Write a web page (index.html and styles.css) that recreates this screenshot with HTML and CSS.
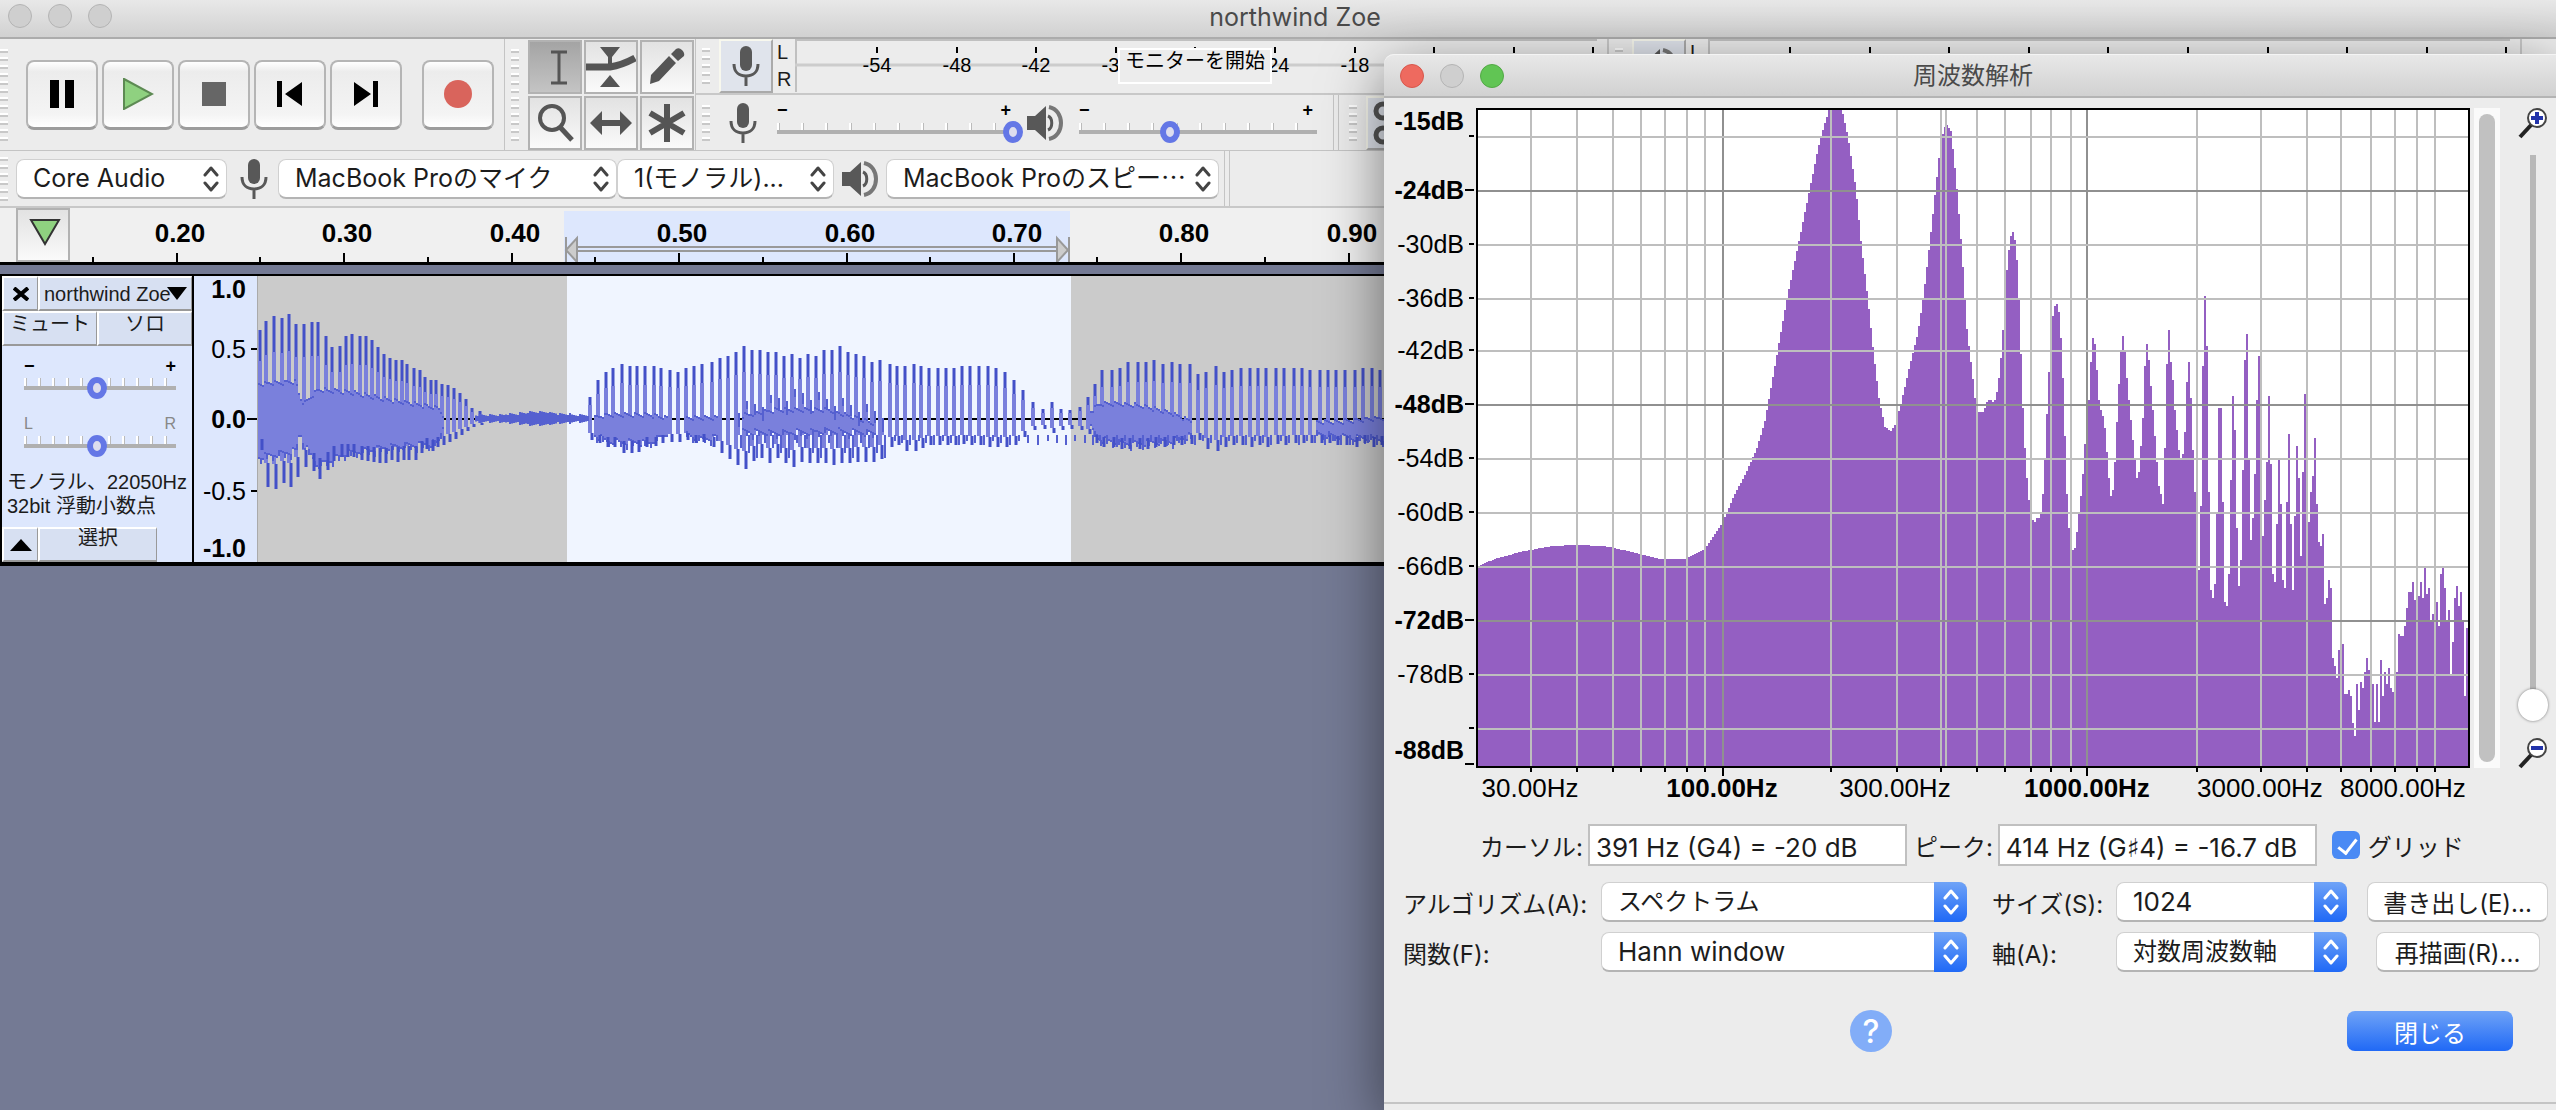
FILE: index.html
```html
<!DOCTYPE html>
<html lang="ja">
<head>
    <meta charset="UTF-8">
    <meta name="viewport" content="width=device-width, initial-scale=1.0">
    <title>northwind Zoe</title>
    <link rel="stylesheet" href="styles.css">
</head>
<body>

    <!-- Shared icons -->
    <svg class="sprite" aria-hidden="true">
        <symbol id="mic" viewBox="0 0 28 40">
            <rect x="8" y="0" width="12" height="25" rx="6" fill="#585858"/>
            <path d="M2 18c0 8 5 12 12 12s12-4 12-12M14 30v10" fill="none" stroke="#585858" stroke-width="3"/>
        </symbol>
        <symbol id="speaker" viewBox="0 0 38 36">
            <path d="M1 11h8L20 1v34L9 25H1z" fill="#585858"/>
            <path d="M22 11c5 2 5 12 0 14" fill="none" stroke="#585858" stroke-width="3"/>
            <path d="M23 2c16 3 16 29 0 32" fill="none" stroke="#777" stroke-width="4"/>
        </symbol>
        <symbol id="updown" viewBox="0 0 16 26">
            <path d="M2 9l6-7 6 7M2 17l6 7 6-7" fill="none" stroke="currentColor" stroke-width="3" stroke-linecap="round" stroke-linejoin="round"/>
        </symbol>
    </svg>

    <div class="app">
        <header class="titlebar">
            <div class="lights"><i></i><i></i><i></i></div>
            <h1>northwind Zoe</h1>
        </header>

        <!-- Toolbars -->
        <div class="dock">
            <div class="toolbar transport">
                <span class="grip"></span>
                <button aria-label="Pause"><svg width="26" height="28"><path d="M1 0h9v28H1zM16 0h9v28h-9z"/></svg></button>
                <button aria-label="Play"><svg width="32" height="32"><path d="M2 1l28 15L2 31z" fill="#8fd180" stroke="#5d8a53" stroke-width="2"/></svg></button>
                <button aria-label="Stop"><svg width="24" height="24"><path d="M0 0h24v24H0z" fill="#666"/></svg></button>
                <button aria-label="Start"><svg width="26" height="26"><path d="M0 0h5v26H0zM25 1v24L8 13z"/></svg></button>
                <button aria-label="End"><svg width="26" height="26"><path d="M20 0h5v26h-5zM1 1v24l17-12z"/></svg></button>
                <button class="record" aria-label="Record"><svg width="28" height="28"><circle cx="14" cy="14" r="14" fill="#d9645c"/></svg></button>
            </div>
            <div class="toolbar tools">
                <span class="grip"></span>
                <div class="tool-grid">
                    <button class="active" aria-label="Selection"><svg width="40" height="40"><path d="M16 5h16M16 36h16M24 5v31" stroke="#555" stroke-width="3"/></svg></button>
                    <button aria-label="Envelope"><svg width="50" height="44"><path d="M14 2h20L26 12v8h-4v-8zM14 42h20L24 30z" fill="#555"/><path d="M0 22h24q12-2 25-9" fill="none" stroke="#555" stroke-width="7"/></svg></button>
                    <button aria-label="Draw"><svg width="40" height="40"><path d="M3 37l1-9L22 9l7 7-17 18zM24 7l5-5q3-2 6 1t2 6l-6 5z" fill="#555"/></svg></button>
                    <button aria-label="Zoom"><svg width="40" height="40"><circle cx="17" cy="15" r="12" fill="none" stroke="#555" stroke-width="4"/><path d="M24 23l13 14" stroke="#555" stroke-width="5"/></svg></button>
                    <button aria-label="Time shift"><svg width="42" height="30"><path d="M0 15L12 3v9h18V3l12 12-12 12v-9H12v9z" fill="#555"/></svg></button>
                    <button aria-label="Multi"><svg width="40" height="40"><path d="M20 1v38M3 10l34 20M37 10L3 30" stroke="#555" stroke-width="6"/></svg></button>
                </div>
            </div>
            <div class="side">
                <div class="toolbar meters">
                    <div class="meter">
                        <span class="grip"></span>
                        <button class="meter-btn" aria-label="Record meter"><svg width="28" height="40"><use href="#mic"/></svg></button>
                        <div class="lr"><span>L</span><span>R</span></div>
                        <svg class="scale" id="recMeter" width="802" height="54"></svg>
                        <span class="tooltip">モニターを開始</span>
                    </div>
                    <div class="meter play">
                        <span class="grip"></span>
                        <button class="meter-btn" aria-label="Playback meter"><svg width="38" height="36"><use href="#speaker"/></svg></button>
                        <div class="lr"><span>L</span><span>R</span></div>
                        <svg class="scale" id="playMeter" width="802" height="54"></svg>
                    </div>
                </div>
                <div class="toolbar mixer">
                    <span class="grip"></span>
                    <svg class="mic" width="28" height="40"><use href="#mic"/></svg>
                    <div class="gain"><span>−</span><span>+</span><input type="range" aria-label="Recording volume" value="100"></div>
                    <svg class="speaker" width="38" height="36"><use href="#speaker"/></svg>
                    <div class="gain"><span>−</span><span>+</span><input type="range" aria-label="Playback volume" value="36"></div>
                    <span class="divider"></span>
                    <span class="grip"></span>
                    <button class="meter-btn" aria-label="Cut"><svg width="40" height="44"><g fill="none" stroke="#555" stroke-width="5"><circle cx="10" cy="10" r="7"/><circle cx="10" cy="34" r="7"/></g></svg></button>
                </div>
            </div>
        </div>

        <div class="toolbar devices">
            <span class="grip"></span>
            <div class="popup host">
                <select aria-label="Audio host"><option>Core Audio</option></select>
                <svg width="16" height="26"><use href="#updown"/></svg>
            </div>
            <svg class="mic" width="28" height="40"><use href="#mic"/></svg>
            <div class="popup input">
                <select aria-label="Recording device"><option>MacBook Proのマイク</option></select>
                <svg width="16" height="26"><use href="#updown"/></svg>
            </div>
            <div class="popup channels">
                <select aria-label="Recording channels"><option>1(モノラル)...</option></select>
                <svg width="16" height="26"><use href="#updown"/></svg>
            </div>
            <svg class="speaker" width="38" height="36"><use href="#speaker"/></svg>
            <div class="popup output">
                <select aria-label="Playback device"><option>MacBook Proのスピー⋯</option></select>
                <svg width="16" height="26"><use href="#updown"/></svg>
            </div>
            <span class="divider"></span>
        </div>

        <!-- Timeline -->
        <div class="timeline">
            <button class="pin" aria-label="Pinned play head"><svg width="32" height="28"><path d="M2 2h28L16 26z" fill="#8fd180" stroke="#333" stroke-width="2"/></svg></button>
            <svg id="ruler" width="2556" height="56"></svg>
        </div>

        <!-- Track -->
        <div class="track">
            <div class="panel">
                <div class="row">
                    <button class="close" aria-label="Close track"><svg width="16" height="14"><path d="M1 1l14 12M15 1L1 13" stroke="#000" stroke-width="4"/></svg></button>
                    <button class="name">northwind Zoe<svg width="20" height="13"><path d="M0 0h20L10 13z"/></svg></button>
                </div>
                <div class="row">
                    <button class="half">ミュート</button>
                    <button class="half">ソロ</button>
                </div>
                <div class="gain small"><span>−</span><span>+</span><input type="range" aria-label="Gain" value="48"></div>
                <div class="gain small pan"><span>L</span><span>R</span><input type="range" aria-label="Pan" value="48"></div>
                <p>モノラル、22050Hz<br>32bit 浮動小数点</p>
                <div class="row bottom">
                    <button class="close" aria-label="Collapse"><svg width="22" height="12"><path d="M0 12h22L11 0z"/></svg></button>
                    <button class="choose">選択</button>
                </div>
            </div>
            <svg class="vruler" width="64" height="286">
                <path d="M57 73h7M53 143h11M57 215h7" stroke="#000" stroke-width="2"/>
                <g font-size="25" text-anchor="end">
                    <text x="52" y="22" font-weight="bold">1.0</text>
                    <text x="52" y="82">0.5</text>
                    <text x="52" y="152" font-weight="bold">0.0</text>
                    <text x="52" y="224">-0.5</text>
                    <text x="52" y="281" font-weight="bold">-1.0</text>
                </g>
            </svg>
            <svg id="wave" class="wave" height="286"></svg>
        </div>
    </div>

    <!-- Frequency analysis window -->
    <section class="dialog">
        <header class="titlebar">
            <div class="lights on"><i></i><i></i><i></i></div>
            <h2>周波数解析</h2>
        </header>

        <div class="plot">
            <svg class="chart" id="chart" viewBox="0 0 1086 706"></svg>
            <div class="scrollbar"><span></span></div>
            <div class="zoom">
                <svg width="30" height="32"><path d="M2 30l12-13" stroke="#222" stroke-width="4"/><circle cx="19" cy="11" r="9" fill="#fff" stroke="#444" stroke-width="2"/><path d="M13 11h12M19 5v12" stroke="#2233aa" stroke-width="4"/></svg>
                <input type="range" aria-label="Vertical zoom" value="0">
                <svg width="30" height="32"><path d="M2 30l12-13" stroke="#222" stroke-width="4"/><circle cx="19" cy="11" r="9" fill="#fff" stroke="#444" stroke-width="2"/><path d="M13 11h12" stroke="#2233aa" stroke-width="4"/></svg>
            </div>
        </div>

        <div class="readout">
            <label for="cursor">カーソル:</label>
            <input type="text" id="cursor" value="391 Hz (G4) = -20 dB" readonly>
            <label for="peak">ピーク:</label>
            <input type="text" id="peak" value="414 Hz (G♯4) = -16.7 dB" readonly>
            <input type="checkbox" id="grid" checked>
            <label for="grid">グリッド</label>
        </div>

        <div class="options">
            <label for="algorithm">アルゴリズム(A):</label>
            <div class="popup blue">
                <select id="algorithm"><option>スペクトラム</option></select>
                <svg width="16" height="26"><use href="#updown"/></svg>
            </div>
            <label for="size">サイズ(S):</label>
            <div class="popup blue short latin">
                <select id="size"><option>1024</option></select>
                <svg width="16" height="26"><use href="#updown"/></svg>
            </div>
            <button class="push">書き出し(E)...</button>

            <label for="func">関数(F):</label>
            <div class="popup blue latin">
                <select id="func"><option>Hann window</option></select>
                <svg width="16" height="26"><use href="#updown"/></svg>
            </div>
            <label for="axis">軸(A):</label>
            <div class="popup blue short">
                <select id="axis"><option>対数周波数軸</option></select>
                <svg width="16" height="26"><use href="#updown"/></svg>
            </div>
            <button class="push narrow">再描画(R)...</button>
        </div>

        <div class="actions">
            <button class="help">?</button>
            <button class="primary">閉じる</button>
        </div>
        <footer class="statusbar"></footer>
    </section>

    <script src="script.js"></script>
</body>
</html>
```

FILE: styles.css
```css
* {
    box-sizing: border-box;
}
body {
    margin: 0;
    height: 100vh;
    overflow: hidden;
    position: relative;
    background-color: #747a94;
    color: #1c1c1c;
    font-family: Inter, "Noto Sans CJK JP", sans-serif;
    font-size: 24px;
}
button, select, input {
    font: inherit;
    color: inherit;
    margin: 0;
    padding: 0;
}
button {
    display: flex;
    align-items: center;
    justify-content: center;
    border: none;
}
svg {
    display: block;
    flex: none;
}
.sprite {
    position: absolute;
    width: 0;
    height: 0;
}

/* Window title bars */
.titlebar {
    display: flex;
    align-items: center;
    justify-content: center;
    position: relative;
    height: 39px;
    background: linear-gradient(#e8e8e8, #d1d1d1);
    border-bottom: 2px solid #acacac;
}
.titlebar h1, .titlebar h2 {
    margin: 0;
    font-size: 24px;
    line-height: 32px;
    font-weight: normal;
    color: #4a4a4a;
}
.app .titlebar {
    padding-left: 34px;
    padding-bottom: 4px;
}
.titlebar h1 {
    font-size: 25px;
}
.lights {
    position: absolute;
    left: 8px;
    top: 4px;
    display: flex;
    gap: 16px;
}
.lights i {
    width: 24px;
    height: 24px;
    border-radius: 50%;
    background-color: #cfcfcf;
    border: 1px solid #b4b4b4;
}
.lights.on i:first-child {
    background-color: #ee6a5f;
    border-color: #d8574c;
}
.lights.on i:last-child {
    background-color: #61c554;
    border-color: #52a945;
}

/* Toolbars */
.dock {
    display: flex;
    height: 112px;
    background-color: #ececec;
    border-bottom: 1px solid #c4c4c4;
}
.toolbar {
    display: flex;
    align-items: center;
}
.grip {
    flex: none;
    width: 8px;
    height: 92px;
    background: repeating-linear-gradient(#fff 0 2px, #c8c8c8 2px 4px, transparent 4px 8px);
}
.transport {
    width: 505px;
    gap: 4px;
    border-right: 1px solid #c4c4c4;
}
.transport .grip {
    margin-right: 14px;
}
.transport button {
    width: 72px;
    height: 70px;
    border: 2px solid #b5b5b5;
    border-bottom: 3px solid #9c9c9c;
    border-radius: 8px;
    background: linear-gradient(#fff, #ececec 15%, #f4f4f4 80%, #fff);
}
.transport .record {
    margin-left: 16px;
}
.tools {
    padding-left: 6px;
    width: 190px;
}
.tools .grip {
    margin-right: 9px;
}
.tool-grid {
    display: grid;
    grid-template-columns: repeat(3, 54px);
    gap: 2px;
}
.tool-grid button {
    height: 54px;
    border: 2px solid #b2b2b2;
    background: linear-gradient(#e2e2e2, #fafafa);
}
.tool-grid .active {
    background: linear-gradient(#a4a4a4, #c4c4c4);
}
.side {
    flex: 1;
    min-width: 0;
    border-left: 1px solid #c4c4c4;
}
.meters {
    height: 56px;
    border-bottom: 2px solid #c8c8c8;
    overflow: hidden;
}
.meter {
    display: flex;
    align-items: center;
    position: relative;
    width: 913px;
    flex: none;
    padding-left: 6px;
    border-right: 2px solid #c8c8c8;
}
.meter .grip, .mixer .grip {
    height: 36px;
    margin-right: 9px;
}
.meter-btn {
    flex: none;
    width: 54px;
    height: 54px;
    border: 2px solid #aaa;
    border-top-color: #f8f8ee;
    border-left-color: #f8f8ee;
    background-color: #e0e4ec;
}
.lr {
    display: flex;
    flex-direction: column;
    width: 22px;
    padding-left: 4px;
    font: 20px/27px "Liberation Sans", sans-serif;
}
.scale, #ruler, .vruler, .chart {
    font-family: "Liberation Sans", sans-serif;
}
.tooltip {
    position: absolute;
    left: 422px;
    top: 9px;
    width: 154px;
    height: 36px;
    border: 2px solid #fff;
    background-color: #ececec;
    font-size: 20px;
    line-height: 22px;
    text-align: center;
    white-space: nowrap;
    color: #000;
}
.mixer {
    height: 55px;
    padding-left: 6px;
}
.mixer .mic {
    margin: 0 20px 0 10px;
}
.mixer .speaker {
    margin: 0 15px 0 3px;
}
.gain {
    display: flex;
    flex-wrap: wrap;
    justify-content: space-between;
    width: 246px;
    flex: none;
    font: bold 18px/20px "Liberation Sans", sans-serif;
    color: #000;
}
.gain input {
    appearance: none;
    width: 100%;
    height: 24px;
    margin-top: -2px;
    background:
        linear-gradient(#b0b0b0, #b0b0b0) 0 12px / calc(100% - 8px) 4px no-repeat,
        repeating-linear-gradient(90deg, #fff 0 2px, #bbb 2px 3px, transparent 3px 24px) 0 5px / calc(100% - 8px) 7px no-repeat;
}
.gain input::-webkit-slider-thumb {
    appearance: none;
    width: 20px;
    height: 22px;
    margin-top: 4px;
    border: 6px solid #6477e6;
    border-radius: 50%;
    background-color: #dde;
}
.mixer .gain {
    padding-bottom: 4px;
}
.mixer .gain span + span {
    margin-right: 12px;
}
.divider {
    width: 6px;
    align-self: stretch;
    border: solid #c4c4c4;
    border-width: 0 1px;
}
.mixer .divider {
    margin: 0 10px 0 8px;
}
.devices {
    height: 57px;
    background-color: #ececec;
    border-bottom: 2px solid #c8c8c8;
}
.devices .grip {
    height: 44px;
    margin-right: 8px;
}
.devices .mic {
    margin: 0 10px 0 13px;
}
.devices .speaker {
    margin: 0 7px;
}
.devices .divider {
    margin-left: 5px;
}

/* Pop-up menus */
.popup {
    position: relative;
    height: 40px;
    flex: none;
}
.popup select {
    appearance: none;
    width: 100%;
    height: 100%;
    padding: 0 24px 0 16px;
    border: 1px solid #d0d0d0;
    border-bottom: 2px solid #b4b4b4;
    border-radius: 8px;
    background-color: #fff;
}
.popup svg {
    position: absolute;
    right: 8px;
    top: 7px;
    color: #444;
    pointer-events: none;
}
.devices .popup {
    font-size: 25px;
}
.host {
    width: 211px;
}
.input {
    width: 339px;
}
.channels {
    width: 217px;
}
.output {
    width: 333px;
}

/* Timeline */
.timeline {
    display: flex;
    height: 57px;
    padding-left: 16px;
    background-color: #f0f0f0;
    border-bottom: 3px solid #000;
    overflow: hidden;
}
.pin {
    flex: none;
    width: 54px;
    height: 54px;
    padding: 0 0 6px 4px;
    border: 2px solid #b2b2b2;
    background: linear-gradient(#e2e2e2, #fafafa);
}

/* Track */
.track {
    display: flex;
    margin-top: 9px;
    border-top: 2px solid #000;
    border-bottom: 4px solid #000;
    background-color: #cbcbcb;
    overflow: hidden;
}
.panel {
    flex: none;
    width: 194px;
    height: 286px;
    display: flex;
    flex-direction: column;
    border: solid #000;
    border-width: 0 2px;
    background-color: #dde7fd;
    font: 20px/22px "Liberation Sans", "Noto Sans CJK JP", sans-serif;
}
.row {
    display: flex;
}
.row button {
    height: 35px;
    border: solid #fff;
    border-width: 2px 0 0 2px;
    border-right: 1px solid #999;
    border-bottom: 2px solid #999;
    background-color: #d7e0f2;
}
.row .close {
    width: 36px;
}
.row .name {
    flex: 1;
    justify-content: flex-start;
    padding-left: 4px;
    white-space: nowrap;
}
.name svg {
    margin-left: -4px;
}
.row .half {
    flex: 1;
    align-items: flex-start;
    line-height: 22px;
}
.gain.small {
    width: 152px;
    margin: 10px 0 0 22px;
}
.gain.small input {
    background:
        linear-gradient(#b0b0b0, #b0b0b0) 0 12px / 100% 4px no-repeat,
        repeating-linear-gradient(90deg, #fff 0 2px, #bbb 2px 3px, transparent 3px 14px) 0 4px / 100% 8px no-repeat;
}
.gain.pan {
    margin-top: 16px;
    color: #888;
    font-size: 16px;
    font-weight: normal;
}
.panel p {
    margin: 14px 0 0 5px;
    line-height: 24px;
    white-space: nowrap;
}
.row.bottom {
    margin-top: auto;
}
.row .choose {
    width: 119px;
    align-items: flex-start;
    line-height: 18px;
}
.vruler {
    background-color: #dde7fd;
    border-right: 1px solid #aaa;
}
.wave {
    flex: 1;
    min-width: 0;
}

/* Frequency analysis window */
.dialog {
    position: absolute;
    left: 1384px;
    right: 0;
    top: 54px;
    bottom: 0;
    display: flex;
    flex-direction: column;
    border-top-left-radius: 10px;
    background-color: #ececec;
    box-shadow: 0 16px 60px rgba(0, 0, 0, 0.5);
}
.dialog .titlebar {
    height: 44px;
    padding-left: 6px;
    border-top: 1px solid #f4f4f4;
    border-bottom-color: #b4b4b4;
    border-top-left-radius: 10px;
}
.dialog .lights {
    left: 16px;
    top: 9px;
}
.plot {
    display: flex;
    align-items: flex-start;
}
.chart {
    flex: 1;
    min-width: 0;
}
.scrollbar {
    width: 26px;
    height: 660px;
    margin: 10px 0 0 4px;
    padding: 6px 5px;
    background-color: #fafafa;
}
.scrollbar span {
    display: block;
    height: 100%;
    border-radius: 8px;
    background-color: #c1c1c1;
}
.zoom {
    width: 56px;
    display: flex;
    flex-direction: column;
    align-items: center;
    padding: 9px 0 0 10px;
}
.zoom input {
    appearance: none;
    writing-mode: vertical-lr;
    direction: rtl;
    width: 32px;
    height: 566px;
    margin: 16px 0;
    background: linear-gradient(#b8b8b8, #b8b8b8) 50% 0 / 6px 550px no-repeat;
}
.zoom input::-webkit-slider-thumb {
    appearance: none;
    width: 30px;
    height: 32px;
    border-radius: 50%;
    background-color: #fff;
    box-shadow: 0 0 3px rgba(0, 0, 0, 0.5);
}
.readout {
    display: flex;
    align-items: center;
    height: 42px;
    margin: 20px 0 16px;
    padding-left: 96px;
}
.readout input[type="text"] {
    width: 319px;
    height: 42px;
    margin: 0 7px 0 5px;
    padding: 4px 0 0 6px;
    border: 2px solid #c0c0c0;
    background-color: #fff;
    font-family: Inter, "DejaVu Sans", sans-serif;
    font-size: 26px;
}
.readout input[type="checkbox"] {
    appearance: none;
    position: relative;
    width: 28px;
    height: 28px;
    margin: 0 8px;
    border-radius: 6px;
    background-color: #4a8af4;
}
.readout input[type="checkbox"]::after {
    content: "";
    position: absolute;
    left: 10px;
    top: 4px;
    width: 8px;
    height: 16px;
    border: solid #fff;
    border-width: 0 3px 3px 0;
    transform: rotate(38deg);
}
.options {
    display: grid;
    grid-template-columns: 198px 1fr 124px 251px 181px;
    row-gap: 10px;
    padding: 0 8px 0 19px;
}
.options label {
    line-height: 46px;
    height: 40px;
    white-space: nowrap;
}
.options .popup {
    margin-right: 25px;
}
.options .short {
    margin-right: 20px;
}
.options .latin {
    font-size: 26px;
}
.options .popup svg {
    color: #fff;
}
.blue::after {
    content: "";
    position: absolute;
    right: 0;
    top: 0;
    width: 33px;
    height: 40px;
    border-radius: 0 8px 8px 0;
    background: linear-gradient(#6fa3f7, #2069f6);
    pointer-events: none;
}
.blue svg {
    z-index: 1;
}
.push {
    height: 40px;
    border: 1px solid #d0d0d0;
    border-bottom: 2px solid #b4b4b4;
    border-radius: 8px;
    background-color: #fff;
    white-space: nowrap;
}
.narrow {
    width: 164px;
    justify-self: center;
}
.actions {
    display: flex;
    align-items: center;
    justify-content: space-between;
    margin-top: 38px;
    padding: 0 43px 0 466px;
}
.help {
    width: 42px;
    height: 42px;
    border-radius: 50%;
    background-color: #82adf8;
    color: #fff;
    font-size: 32px;
    font-weight: 500;
}
.primary {
    width: 166px;
    height: 40px;
    border-radius: 8px;
    background: linear-gradient(#6fa3f7, #2069f6);
    color: #fff;
}
.statusbar {
    margin-top: auto;
    height: 8px;
    border-top: 2px solid #c4c4c4;
}
```

FILE: script.js
```js
const NS = 'http://www.w3.org/2000/svg';

function add(parent, name, attrs, text) {
    const el = document.createElementNS(NS, name);
    for (const key in attrs) {
        el.setAttribute(key, attrs[key]);
    }
    if (text) {
        el.textContent = text;
    }
    parent.appendChild(el);
    return el;
}

// value at x on a line through [x, a, b] points, i picks a or b
function between(points, x, i) {
    let n = 1;
    while (n < points.length - 1 && points[n][0] < x) {
        n++;
    }
    const p = points[n - 1], q = points[n];
    return Math.round(p[i] + (q[i] - p[i]) * (x - p[0]) / (q[0] - p[0]));
}

// Level meters
function drawMeter(id, first, labels) {
    const svg = document.getElementById(id);
    add(svg, 'path', { d: 'M802 1H1v52', fill: 'none', stroke: '#c0c0c0', 'stroke-width': 2 });
    add(svg, 'path', { d: 'M0 26h802', stroke: '#ccc', 'stroke-width': 3 });
    for (let i = 0; i < 10; i++) {
        const x = Math.round(first + i * 79.6);
        add(svg, 'path', { d: `M${x} 8v6`, stroke: '#000', 'stroke-width': 2 });
        if (labels[i]) {
            add(svg, 'text', { x: x, y: 33, 'font-size': 20, 'text-anchor': 'middle' }, labels[i]);
        }
    }
}
drawMeter('recMeter', 82, ['-54', '-48', '-42', '-36', '', '-24', '-18']);
drawMeter('playMeter', 82, []);

// Time ruler, the svg starts 70px from the left edge
const ruler = document.getElementById('ruler');
add(ruler, 'rect', { x: 494, y: 3, width: 506, height: 52, fill: '#dde7fd' });
add(ruler, 'path', { d: 'M508 39h480M508 43h480', stroke: '#999', 'stroke-width': 2 });
add(ruler, 'path', { d: 'M496 29v26M507 30v24l-11-12zM999 29v26M987 30v24l11-12z', fill: '#ccc', stroke: '#999', 'stroke-width': 2 });
for (let i = 0; i < 9; i++) {
    const x = 107 + Math.round(i * 167.4);
    add(ruler, 'path', { d: `M${x} 45v10M${x - 84} 49v6`, stroke: '#000', 'stroke-width': 2 });
    if (i < 8) {
        add(ruler, 'text', { x: x + 3, y: 34, 'font-size': 26, 'font-weight': 'bold', 'text-anchor': 'middle' }, (0.2 + i / 10).toFixed(2));
    }
}

// Waveform: x, peak above and below the centre line, in pixels
const CENTER = 143;
const peaks = [
    [2,89,31],[8,98,68],[16,103,70],[24,101,64],[31,105,68],[38,95,58],[46,95,48],[54,97,52],[60,97,60],[68,83,51],[74,72,42],
    [82,73,38],[88,83,38],[94,85,38],[102,83,41],[108,83,42],[114,79,43],[120,72,44],[126,65,44],[132,61,41],[138,59,43],[144,59,41],
    [149,55,41],[156,51,41],[162,49,34],[167,42,30],[173,39,32],[178,39,28],[184,35,26],[190,34,23],[196,31,20],[202,26,16],[208,20,12],[214,11,8],[222,8,6],
    [332,22,21],[340,39,24],[348,47,28],[355,51,28],[364,55,34],[372,53,34],[379,53,33],[387,53,28],[396,53,27],[403,51,24],[412,49,23],
    [420,47,23],[428,51,21],[436,53,24],[444,55,23],[454,57,28],[462,61,34],[470,63,40],[478,67,46],[486,73,50],[494,69,42],[502,69,39],
    [510,67,44],[518,67,39],[526,63,44],[534,65,48],[542,61,43],[550,65,44],[558,63,44],[566,69,44],[574,69,46],[582,73,44],[590,67,44],
    [598,65,43],[606,63,43],[614,57,43],[622,59,40],[632,55,28],[639,53,26],[647,53,32],[656,55,32],[663,53,29],[671,51,26],[680,51,26],
    [688,51,26],[696,51,26],[704,53,25],[712,53,26],[721,53,26],[730,53,28],[738,51,28],[747,47,28],[756,39,26],[765,29,18],[775,17,11],
    [785,10,10],[794,17,14],[803,10,11],[812,9,10],[822,12,11],[830,22,15],[837,35,24],[844,49,28],[854,49,28],[862,51,30],[870,57,30],
    [880,57,30],[888,57,30],[896,59,28],[905,55,28],[914,57,26],[922,55,26],[932,55,25],[940,45,21],[948,47,30],[958,53,32],[966,47,28],
    [974,49,26],[983,51,26],[992,51,28],[1000,51,26],[1008,51,28],[1018,51,25],[1026,51,26],[1036,51,24],[1044,51,24],[1052,49,24],
    [1062,49,24],[1070,49,24],[1078,49,26],[1087,49,26],[1097,49,28],[1105,51,24],[1114,51,28],[1122,49,26]
];
// dense parts that fill up between the peaks, same units
const bodies = [
    [[0,34,36],[38,36,30],[42,20,10],[46,14,24],[60,28,44],[90,26,32],[130,18,26],[180,10,22],[186,2,2]],
    [[336,0,14],[350,3,20],[390,3,22],[410,0,12]],
    [[428,0,12],[440,0,18],[460,0,16]],
    [[484,2,10],[520,8,12],[570,8,10],[618,-6,12]],
    [[832,6,6],[842,14,18],[860,14,22],[885,12,22],[915,4,20],[935,-4,14]],
    [[1058,-4,12],[1080,-4,16],[1126,0,18]]
];
const wave = document.getElementById('wave');
add(wave, 'rect', { x: 309, y: 0, width: 504, height: 286, fill: '#f0f5ff' });
add(wave, 'path', { d: `M0 ${CENTER}H2300`, stroke: '#000', 'stroke-width': 2 });

let light = '', dark = '', fill = '', tips = '';
bodies.forEach(body => {
    for (let x = body[0][0] + 1; x < body[body.length - 1][0]; x += 2) {
        const up = between(body, x, 1) + x * 7 % 5;
        const down = between(body, x, 2) + x * 11 % 7;
        fill += `M${x} ${CENTER - up}V${CENTER + down}`;
        tips += `M${x} ${CENTER - up}v2M${x} ${CENTER + down - 2}v${x % 3 ? 2 : 6}`;
    }
});
peaks.forEach(([x, up, down], i) => {
    const top = CENTER - up, bottom = CENTER + down;
    const cap = Math.round(up * 0.35), foot = Math.round(down * 0.35);
    light += `M${x} ${top + cap}V${bottom - foot}`;
    dark += `M${x} ${top}v${cap}M${x + 2} ${bottom - foot}v${foot}`;
    // second, lower wave that shows up in the loud part
    if (x > 470 && x < 624) {
        const echo = 32 - Math.round(Math.abs(x - 540) / 4) - i % 3 * 5;
        fill += `M${x + 3} ${CENTER - echo + 6}v${echo + 10}`;
        tips += `M${x + 3} ${CENTER - echo}v${8 + i % 3 * 3}M${x + 5} ${CENTER + 16}v${8 + i % 4 * 5}`;
    } else if (x > 628) {
        tips += `M${x + 5} ${CENTER + 16}v${6 + i % 3 * 2}`;
    }
});
add(wave, 'path', { d: fill, stroke: '#7a80dc', 'stroke-width': 2 });
add(wave, 'path', { d: light, stroke: '#7a80dc', 'stroke-width': 4 });
add(wave, 'path', { d: tips, stroke: '#5560d0', 'stroke-width': 2 });
add(wave, 'path', { d: dark, stroke: '#4350c8', 'stroke-width': 3 });

// almost silent part
let quiet = '';
for (let x = 218; x < 332; x += 2) {
    const size = 3 + Math.round(3 * Math.exp(-Math.pow((x - 280) / 24, 2))) + (x * 7 % 5) / 2;
    quiet += `M${x} ${CENTER - size}V${CENTER + size - 1}`;
}
add(wave, 'path', { d: quiet, stroke: '#5560d0', 'stroke-width': 2 });

// Spectrum
const chart = document.getElementById('chart');
const LEFT = 94, TOP = 12, WIDTH = 990, HEIGHT = 656;
// smooth low end, in pixels from the top left of the plot
const low = [
    [0,456],[17,449],[42,442],[74,436],[99,435],[126,436],[155,442],[183,449],[206,449],[227,439],[245,412],[256,386],[269,361],
    [279,338],[287,311],[292,283],[300,239],[309,189],[319,141],[331,83],[342,30],[351,0],[364,0],[370,26],[378,79],[383,131],
    [390,189],[396,246],[401,288],[407,317],[413,321],[417,315],[423,294],[432,255],[440,223],[446,182],[452,131],[458,76],
    [463,30],[468,14],[473,21],[478,67],[484,141],[489,219],[495,269],[498,297]
];
// high end as steps, in thirds of a pixel from (492, 90)
const high = [
    20,636, 43,624, 49,606, 55,600, 67,606, 73,600, 79,576, 85,534, 91,474, 97,390, 103,300, 108,210, 114,150, 120,108, 126,96,
    132,120, 138,180, 144,298, 150,462, 156,624, 162,744, 168,834, 174,900, 180,960, 192,966, 198,954, 210,940, 216,882, 222,780,
    228,642, 234,516, 240,400, 246,348, 252,318, 258,312, 264,336, 270,414, 276,534, 282,708, 288,882, 294,984, 300,1050, 312,1044,
    318,996, 324,940, 330,888, 336,822, 342,732, 348,660, 354,600, 360,486, 366,414, 372,432, 378,510, 384,600, 390,630, 396,648,
    402,684, 408,756, 414,834, 420,888, 426,870, 432,786, 438,666, 444,552, 450,456, 456,408, 462,456, 468,534, 474,600, 480,660,
    486,720, 492,778, 498,834, 504,816, 510,738, 516,654, 522,498, 528,432, 534,480, 540,558, 546,630, 552,708, 558,786, 564,858,
    570,882, 576,912, 582,744, 588,492, 594,390, 600,486, 606,540, 612,630, 618,690, 624,750, 630,774, 636,762, 642,696, 648,546,
    654,486, 660,594, 666,750, 672,876, 678,1000, 684,1110, 690,918, 696,498, 702,288, 708,438, 714,876, 720,1170, 726,1194,
    732,1152, 738,940, 744,624, 756,906, 762,1206, 768,1218, 774,1122, 780,840, 786,588, 792,690, 798,984, 804,1158, 810,1080,
    816,810, 822,480, 828,402, 834,780, 840,1020, 846,954, 852,822, 858,600, 864,468, 870,760, 876,1008, 882,900, 888,786,
    894,588, 900,792, 906,1122, 912,1146, 918,972, 924,780, 930,912, 936,1140, 942,1164, 948,906, 954,702, 960,972, 966,1170,
    972,948, 978,738, 984,834, 990,1068, 996,816, 1002,582, 1008,966, 1020,876, 1026,828, 1032,714, 1038,912, 1044,1026,
    1050,1038, 1056,1002, 1062,1212, 1068,1194, 1074,1140, 1080,1164, 1086,1374, 1092,1398, 1098,1434, 1104,1350, 1110,1420,
    1116,1332, 1122,1482, 1134,1470, 1140,1488, 1146,1570, 1152,1608, 1158,1452, 1164,1530, 1170,1446, 1176,1464, 1182,1416,
    1188,1374, 1194,1410, 1200,1452, 1212,1566, 1218,1452, 1224,1566, 1230,1380, 1236,1488, 1242,1416, 1248,1452, 1254,1404,
    1260,1464, 1266,1476, 1272,1440, 1278,1416, 1284,1302, 1290,1308, 1302,1278, 1308,1224, 1314,1176, 1326,1146, 1332,1200,
    1344,1188, 1350,1146, 1356,1194, 1362,1104, 1368,1182, 1374,1164, 1380,1260, 1386,1242, 1392,1260, 1398,1206, 1404,1278,
    1410,1122, 1416,1104, 1422,1164, 1428,1260, 1434,1230, 1440,1425, 1446,1326, 1452,1194, 1458,1158, 1464,1218, 1470,1176,
    1476,1260, 1482,1488, 1488,1284
];

add(chart, 'rect', { x: LEFT, y: TOP, width: WIDTH, height: HEIGHT, fill: '#fff' });
let d = `M0 ${HEIGHT}`;
for (let x = 0; x < 498; x += 2) {
    d += `H${x}V${between(low, x + 1, 1)}`;
}
for (let i = 0; i < high.length; i += 2) {
    d += `H${Math.round(492 + high[i] / 3)}V${Math.round(90 + high[i + 1] / 3)}`;
}
d += `H${WIDTH}V${HEIGHT}z`;
add(chart, 'path', { d: d, fill: '#945fc2', transform: `translate(${LEFT} ${TOP})` });

// grid and axis ticks
const rows = [
    [39, ''], [93, '-24dB', 1], [147, '-30dB'], [201, '-36dB'], [253, '-42dB'], [307, '-48dB', 1], [361, '-54dB'],
    [415, '-60dB'], [469, '-66dB'], [523, '-72dB', 1], [577, '-78dB'], [631, '']
];
const cols = [147, 193, 229, 257, 281, 303, 321, 339, 447, 513, 557, 562, 593, 621, 647, 667, 687, 703, 813, 877, 923, 957, 987, 1011, 1033, 1051];
cols.forEach(x => {
    const major = x === 339 || x === 703;
    add(chart, 'path', { d: `M${x} 12v656`, stroke: major ? '#909090' : '#bebebe', 'stroke-width': 2 });
    if (x !== 562) {
        add(chart, 'path', { d: `M${x} 670v${major ? 8 : 4}`, stroke: '#000', 'stroke-width': 2 });
    }
});
rows.forEach(([y, text, major]) => {
    add(chart, 'path', { d: `M94 ${y}h990`, stroke: major ? '#909090' : '#bebebe', 'stroke-width': 2 });
    add(chart, 'path', { d: `M${major ? 81 : 85} ${y - 1}H${90}`, stroke: '#000', 'stroke-width': 2 });
    label(80, y + 8, text, major, 'end');
});
add(chart, 'path', { d: 'M81 666h9', stroke: '#000', 'stroke-width': 2 });
add(chart, 'rect', { x: 93, y: 11, width: 992, height: 658, fill: 'none', stroke: '#000', 'stroke-width': 2 });

function label(x, y, text, bold, anchor) {
    if (text) {
        const size = anchor === 'end' ? 25 : 26;
        add(chart, 'text', { x: x, y: y, 'font-size': size, 'font-weight': bold ? 'bold' : 'normal', 'text-anchor': anchor }, text);
    }
}
label(80, 32, '-15dB', true, 'end');
label(80, 661, '-88dB', true, 'end');
label(146, 699, '30.00Hz', false, 'middle');
label(338, 699, '100.00Hz', true, 'middle');
label(511, 699, '300.00Hz', false, 'middle');
label(703, 699, '1000.00Hz', true, 'middle');
label(876, 699, '3000.00Hz', false, 'middle');
label(1019, 699, '8000.00Hz', false, 'middle');
```
